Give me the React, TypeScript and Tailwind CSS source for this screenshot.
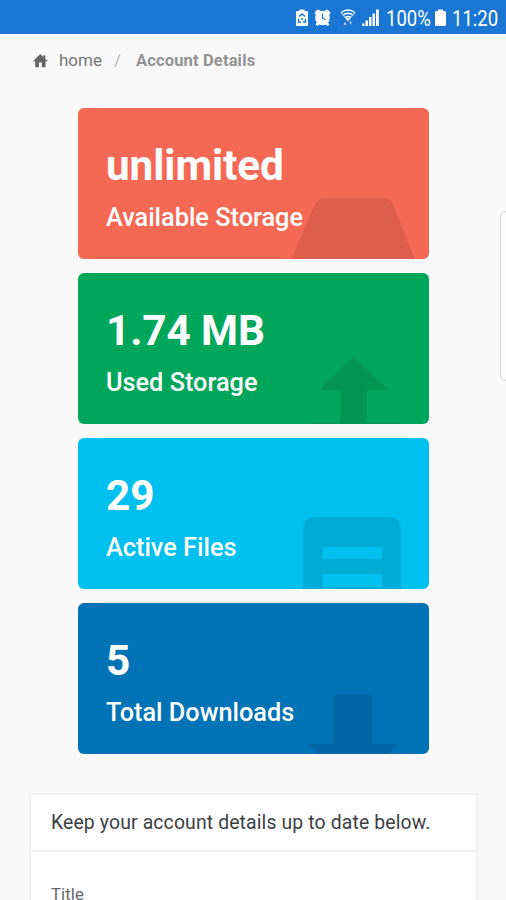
import type { ReactNode } from "react";

type CardProps = {
  value: string;
  label: string;
  color: string;
  children: ReactNode;
};

function StatCard({ value, label, color, children }: CardProps) {
  return (
    <section className={`relative h-[150.7px] overflow-hidden rounded-[6px] pl-[28px] pt-[33px] text-white ${color}`}>
      <svg className="absolute inset-0" width="352" height="151" viewBox="0 0 352 151" fill="#000" fillOpacity=".1">
        {children}
      </svg>
      <div className="relative whitespace-nowrap text-[42.3px] font-bold leading-[50px] tracking-[-0.1px]">{value}</div>
      <div className="relative mt-[11.9px] whitespace-nowrap text-[25.3px] font-medium leading-[30px]">{label}</div>
    </section>
  );
}

function StatusBar() {
  return (
    <header className="flex h-[34px] items-start bg-[#1976d2] pl-[295px] pt-[8px] text-white">
      <svg className="h-[20px] w-[118px] shrink-0" viewBox="295 8 118 20" fill="#fff">
        <path d="M299.500 9.500h5V11h2.500a1 1 0 0 1 1 1v13a1 1 0 0 1-1 1h-10a1 1 0 0 1-1-1V12a1 1 0 0 1 1-1h2.500z" />
        <g stroke="#1976d2" strokeWidth="1.4" fill="none">
          <path d="M299 16.500l3-2.500 3 2.500M298.500 19v3h2.500M305.500 19v3H303M301 19h2" />
        </g>
        <circle cx="322.500" cy="18" r="7.300" />
        <path d="M314.500 12.500l3-3 3 1-5 4.500zM330.500 12.500l-3-3-3 1 5 4.500zM315.500 24.500l2-2.500 2 2-2 2zM329.500 24.500l-2-2.500-2 2 2 2z" />
        <path d="M322.500 13.500V18l3 1.800" fill="none" stroke="#1976d2" strokeWidth="1.3" />
        <g fill="none" stroke="#fff" strokeWidth="1.3">
          <path d="M341 12.500q7-5 14 0M343 15q5-3.500 10 0M345 17.500q3-2 6 0" />
          <path d="M341 12.500l7 8 7-8" strokeOpacity=".55" />
        </g>
        <path d="M345.500 18h5l-2.500 3z" />
        <path d="M343.500 25h3l-1.500-3.500zM349 21.500h3l-1.500 3.500z" fillOpacity=".65" />
        <path d="M362 23.500h2.500V26H362zM365.500 20.500h2.500V26h-2.500zM369 17h2.500v9H369zM372.500 13.500h2.500V26h-2.500zM376 9.500h2.800V26H376z" />
      </svg>
      <span className="-ml-[27px] w-[43px] origin-left scale-x-[.86] whitespace-nowrap pt-px text-[21.5px] leading-[20px]">100%</span>
      <svg className="ml-[6px] h-[20px] w-[11px] shrink-0" viewBox="0 0 11 20" fill="#fff">
        <path d="M3 1.500h5V3h2q1 0 1 1v13q0 1-1 1H1q-1 0-1-1V4q0-1 1-1h2z" />
      </svg>
      <span className="ml-[6px] w-[46px] origin-left scale-x-[.86] whitespace-nowrap pt-px text-[21.5px] leading-[20px]">11:20</span>
    </header>
  );
}

export default function App() {
  return (
    <div className="relative h-[900px] w-[506px] overflow-hidden bg-[#f9f9f9] font-[Roboto,sans-serif]">
      <StatusBar />
      <nav className="flex h-[54px] items-center pl-[32px] text-[#777]">
        <svg className="h-[16px] w-[17px] shrink-0" viewBox="0 0 17 16" fill="#666">
          <path d="M8.300 1L.8 8.200h2.400v6h3.700V9.500h2.900v4.700h3.700v-6h2.400l-2.600-2.500V2.200h-2v1.700z" />
        </svg>
        <span className="ml-[10px] w-[43px] whitespace-nowrap text-[17px]">home</span>
        <span className="ml-[12px] w-[8px] text-[17px] text-[#bbb]">/</span>
        <span className="ml-[14px] whitespace-nowrap text-[16.5px] font-bold tracking-[0.15px] text-[#929292]">Account Details</span>
      </nav>

      <main className="ml-[78px] mt-[20px] flex w-[351.3px] flex-col gap-[14.4px]">
        <StatCard value="unlimited" label="Available Storage" color="bg-[#f56954]">
          <path d="M213.500 151L237 96q3-6 10-6h58q7 0 10 6l21.500 55z" />
        </StatCard>
        <StatCard value="1.74 MB" label="Used Storage" color="bg-[#00a65a]">
          <path d="M275.500 83.500l35.500 34h-22.500V151h-26v-33.500H240zM232 150h30.500v1H231zM288.500 150H321v1h-32.500z" />
        </StatCard>
        <StatCard value="29" label="Active Files" color="bg-[#00c0ef]">
          <path fillRule="evenodd" d="M225 151V91q0-12 12-12h74q12 0 12 12v60zM244.500 109v12h59.500v-12zM244.500 136v13h59.500v-13z" />
        </StatCard>
        <StatCard value="5" label="Total Downloads" color="bg-[#0073b7]">
          <path d="M255 91.500h39v49h26l-9 10.500h-72l-10-10.500h26z" />
        </StatCard>
      </main>

      <section className="ml-[29px] mt-[39px] h-[120px] w-[449px] rounded-t-[3px] border-2 border-b-0 border-[#f0f0f0] bg-white">
        <h1 className="flex h-[57px] items-center whitespace-nowrap border-b-2 border-[#f0f0f0] pl-[20px] text-[19.4px] tracking-[0.13px] text-[#3c4043]">
          Keep your account details up to date below.
        </h1>
        <label className="block pl-[20px] pt-[33px] text-[16.500px] leading-[20px] tracking-[0.2px] text-[#666]">Title</label>
      </section>

      <aside className="absolute left-[500px] top-[211px] h-[170px] w-[14px] rounded-[6px] border border-[#d2d2d2] bg-[#fcfcfc]" />
    </div>
  );
}
